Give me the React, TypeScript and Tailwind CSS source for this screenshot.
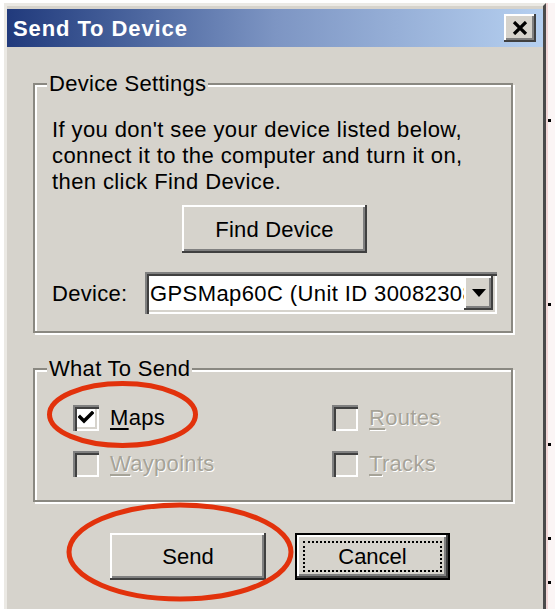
import type { ReactNode } from "react";

const raised =
  "bg-[#d6d3cc] shadow-[inset_-2px_-2px_0_#404040,inset_2px_2px_0_#ffffff,inset_-4px_-4px_0_#808080]";
const sunken =
  "shadow-[inset_2px_2px_0_#808080,inset_4px_4px_0_#404040,inset_-2px_-2px_0_#ffffff,inset_-4px_-4px_0_#d6d3cc]";
const groupBox =
  "ml-[26px] w-[480px] border-2 border-[#8a8881] shadow-[2px_2px_0_#ffffff,inset_2px_2px_0_#ffffff]";

function GroupBox({
  title,
  className,
  legendClass,
  children,
}: {
  title: string;
  className: string;
  legendClass: string;
  children: ReactNode;
}) {
  return (
    <fieldset className={`${groupBox} ${className}`}>
      <legend className={`${legendClass} px-[2px] bg-[#d6d3cc] text-[22px] leading-[26px] tracking-[0.3px] text-black`}>
        {title}
      </legend>
      {children}
    </fieldset>
  );
}

function CheckBox({ checked, disabled }: { checked?: boolean; disabled?: boolean }) {
  return (
    <div
      className={`w-[26px] h-[26px] flex items-center justify-center flex-shrink-0 ${sunken} ${
        disabled ? "bg-[#d6d3cc]" : "bg-white"
      }`}
    >
      {checked && (
        <svg width="16" height="14" viewBox="0 0 16 14">
          <path d="M2 6 L6 10 L14 2" fill="none" stroke="#000" strokeWidth="3.4" strokeLinecap="square" />
        </svg>
      )}
    </div>
  );
}

function Option({ letter, rest, checked, disabled }: { letter: string; rest: string; checked?: boolean; disabled?: boolean }) {
  const textClass = disabled ? "text-[#a6a398] [text-shadow:1px_1px_0_#ffffff]" : "text-black";
  return (
    <div className="flex items-center h-[26px]">
      <CheckBox checked={checked} disabled={disabled} />
      <span className={`ml-[11px] text-[22px] leading-[26px] tracking-[0.3px] ${textClass}`}>
        <span className="underline decoration-2 underline-offset-[3px]">{letter}</span>
        {rest}
      </span>
    </div>
  );
}

export default function App() {
  return (
    <div className="relative w-[555px] h-[609px] bg-white flex overflow-hidden font-['Liberation_Sans',Arial,sans-serif]">
      <div className="mt-[3px] ml-[4px] w-[542px] h-[608px] flex flex-col bg-[#d6d3cc] border-l-[3px] border-t-[3px] border-[#ebe9e4] border-r-[3px] border-r-[#4a4a4a] border-b-2 border-b-[#808080]">
        <div className="mt-[3px] h-[38px] flex items-center justify-between bg-gradient-to-r from-[#213a7c] via-[#7d95c3] to-[#b6d0f0]">
          <span className="pl-[6px] text-white font-bold text-[22px] tracking-[0.9px]">Send To Device</span>
          <div className={`mr-[7px] w-[32px] h-[28px] flex items-center justify-center ${raised}`}>
            <svg width="16" height="14" viewBox="0 0 16 14">
              <path d="M2 1 L14 13 M14 1 L2 13" stroke="#000" strokeWidth="3.2" />
            </svg>
          </div>
        </div>

        <GroupBox
          title="Device Settings"
          legendClass="ml-[-5px]"
          className="mt-[24px] pl-[17px] pr-[14px] pt-[20px] pb-[17px]"
        >
          <p className="text-[22px] leading-[26px] tracking-[0.4px] text-black">
            If you don't see your device listed below,
            <br />
            connect it to the computer and turn it on,
            <br />
            then click Find Device.
          </p>
          <div
            className={`mx-auto mt-[10px] w-[185px] h-[48px] flex items-center justify-center text-[22px] tracking-[0.2px] text-black ${raised}`}
          >
            Find Device
          </div>
          <div className="flex items-center mt-[19px]">
            <span className="w-[93px] text-[22px] tracking-[0.3px] text-black">Device:</span>
            <div className={`w-[352px] h-[42px] flex items-center bg-white p-[4px] ${sunken}`}>
              <span className="flex-1 min-w-0 overflow-hidden whitespace-nowrap pl-[1px] text-[22px] tracking-[0.4px] text-black">
                GPSMap60C (Unit ID 30082308)
              </span>
              <div className={`w-[29px] h-[34px] flex-shrink-0 flex items-center justify-center ${raised}`}>
                <svg width="14" height="8" viewBox="0 0 14 8">
                  <path d="M0 0 H14 L7 8 Z" fill="#000" />
                </svg>
              </div>
            </div>
          </div>
        </GroupBox>

        <GroupBox title="What To Send" legendClass="ml-[-26px]" className="mt-[23px] pl-[38px] pt-[23px] pb-[23px]">
          <div className="grid grid-cols-[259px_1fr] gap-y-[20px]">
            <Option letter="M" rest="aps" checked />
            <Option letter="R" rest="outes" disabled />
            <Option letter="W" rest="aypoints" disabled />
            <Option letter="T" rest="racks" disabled />
          </div>
        </GroupBox>

        <div className="flex mt-[31px] ml-[103px] gap-[29px]">
          <div className={`w-[156px] h-[47px] flex items-center justify-center text-[22px] text-black ${raised}`}>Send</div>
          <div className="w-[155px] h-[47px] border-2 border-black flex">
            <div className={`flex-1 p-[6px] flex ${raised}`}>
              <div className="flex-1 border-2 border-dotted border-black flex items-center justify-center text-[22px] text-black">
                Cancel
              </div>
            </div>
          </div>
        </div>
      </div>

      <div className="relative flex-1 mt-[3px] bg-[#fbf5f5] border-l-2 border-[#f1d6d6]">
        <div className="absolute left-0 top-[116px] w-[3px] h-[3px] bg-black" />
        <div className="absolute left-0 top-[300px] w-[3px] h-[3px] bg-black" />
        <div className="absolute left-0 top-[440px] w-[3px] h-[3px] bg-black" />
        <div className="absolute left-0 top-[534px] w-[3px] h-[3px] bg-black" />
        <div className="absolute left-0 top-[578px] w-[3px] h-[3px] bg-black" />
      </div>

      <svg className="absolute inset-0 pointer-events-none" width="555" height="609" viewBox="0 0 555 609">
        <ellipse cx="122.5" cy="414.5" rx="73" ry="31" fill="none" stroke="#e2320c" strokeWidth="5" />
        <ellipse cx="180" cy="552" rx="111" ry="47" fill="none" stroke="#e2320c" strokeWidth="5" />
      </svg>
    </div>
  );
}
